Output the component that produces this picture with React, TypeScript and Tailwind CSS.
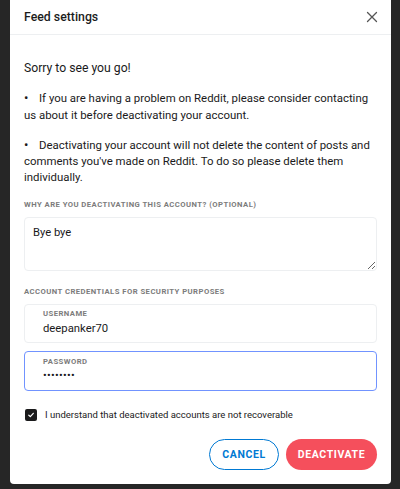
import React from "react";

export default function App() {
  const label = "text-[7.7px] font-bold tracking-[0.45px] text-[#7c7c7c] leading-[12px]";
  return (
    <div className="w-[400px] h-[489px] bg-[#262626] pl-[10px] pr-[9px] overflow-hidden" style={{ fontFamily: 'Roboto, "Noto Sans", sans-serif' }}>
      <div className="bg-white h-[484px] rounded-b-[4px] flex flex-col">
        <div className="h-[35px] flex items-center justify-between pl-[14px] pr-[13px] border-b border-[#edeff1]">
          <span className="text-[12.3px] font-medium text-[#1c1c1c]">Feed settings</span>
          <svg width="12" height="12" viewBox="0 0 12 12" className="text-[#555]">
            <path d="M1.5 1.5 L10.5 10.5 M10.5 1.5 L1.5 10.5" stroke="currentColor" strokeWidth="1.3" strokeLinecap="round" />
          </svg>
        </div>
        <div className="px-[14px] pt-[25px] text-[11.4px] text-[#1a1a1b]">
          <p className="text-[12.2px] leading-[17px]">Sorry to see you go!</p>
          <p className="mt-[13px] leading-[16.5px]"><span className="inline-block w-[15px] text-[13px] leading-[16px]">•</span>If you are having a problem on Reddit, please consider contacting us about it before deactivating your account.</p>
          <p className="mt-[14px] leading-[16px]"><span className="inline-block w-[15px] text-[13px] leading-[16px]">•</span>Deactivating your account will not delete the content of posts and comments you've made on Reddit. To do so please delete them individually.</p>
          <p className={`mt-[14px] ${label}`}>WHY ARE YOU DEACTIVATING THIS ACCOUNT? (OPTIONAL)</p>
          <textarea
            className="mt-[6px] block w-full h-[54px] border border-[#edeff1] rounded-[4px] px-[8px] py-[6px] text-[11.2px] leading-[17px] text-[#1a1a1b] outline-none resize-y"
            defaultValue="Bye bye"
            style={{ fontFamily: 'Roboto, "Noto Sans", sans-serif' }}
          />
          <p className={`mt-[15px] ${label}`}>ACCOUNT CREDENTIALS FOR SECURITY PURPOSES</p>
          <div className="mt-[6px] h-[39px] border border-[#edeff1] rounded-[4px] pl-[18px] pt-[3px]">
            <div className={label}>USERNAME</div>
            <div className="text-[11.3px] text-[#1a1a1b] leading-[17px]">deepanker70</div>
          </div>
          <div className="mt-[8px] h-[40px] border border-[#7193ff] rounded-[4px] pl-[18px] pt-[4px]">
            <div className={label}>PASSWORD</div>
            <div className="text-[11px] text-[#1a1a1b] leading-[16px] tracking-[0.3px]">••••••••</div>
          </div>
          <div className="mt-[18px] flex items-center gap-[8px] h-[12px]">
            <div className="w-[12px] h-[12px] ml-[1px] bg-[#1a1a1b] rounded-[2px] flex items-center justify-center">
              <svg width="8" height="8" viewBox="0 0 8 8">
                <path d="M1.8 4.2 L3.3 5.6 L6.3 2.3" stroke="white" strokeWidth="1.2" fill="none" strokeLinecap="round" strokeLinejoin="round" />
              </svg>
            </div>
            <span className="text-[9.5px] leading-[12px] text-[#1a1a1b]">I understand that deactivated accounts are not recoverable</span>
          </div>
          <div className="mt-[18px] flex justify-end gap-[7px]">
            <button className="h-[31px] w-[70px] rounded-full border border-[#0079d3] text-[#0079d3] text-[10.5px] font-bold tracking-[0.6px]">CANCEL</button>
            <button className="h-[31px] w-[91px] rounded-full bg-[#f54f5c] text-white text-[10.5px] font-bold tracking-[0.6px]">DEACTIVATE</button>
          </div>
        </div>
      </div>
    </div>
  );
}
